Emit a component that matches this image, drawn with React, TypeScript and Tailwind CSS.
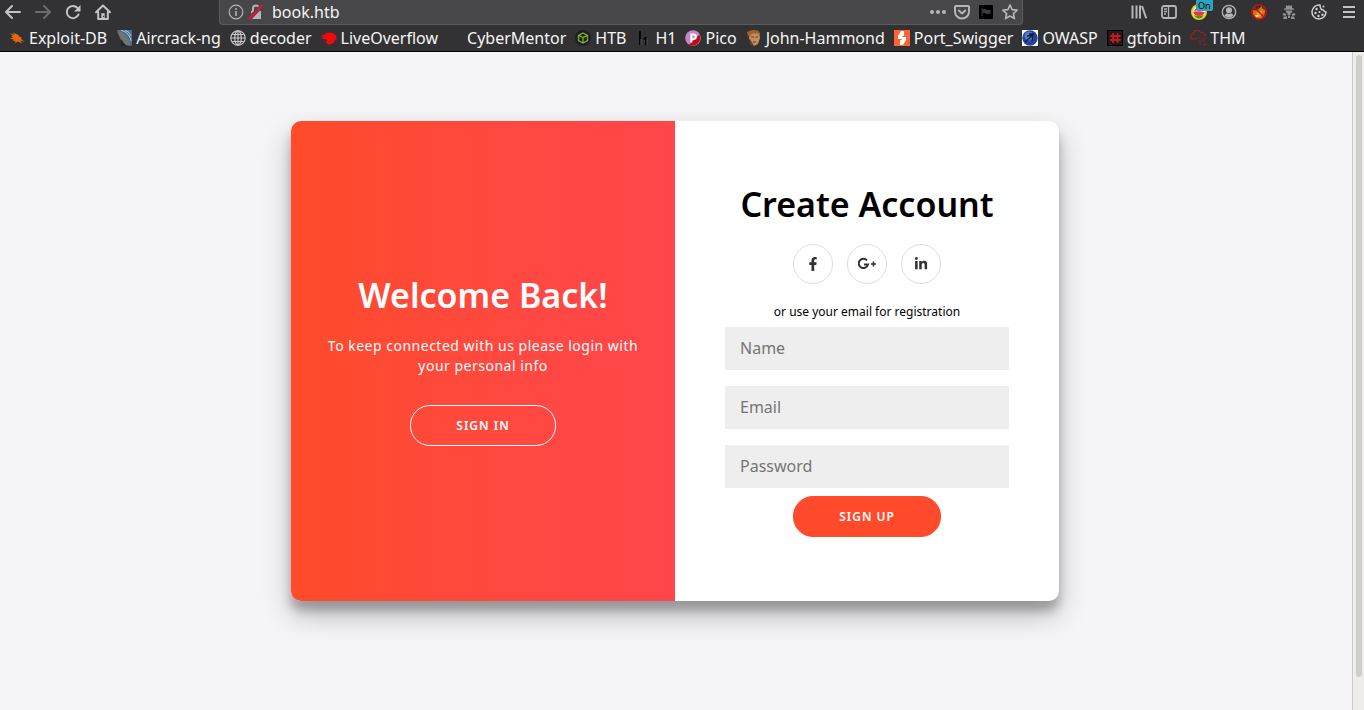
import type { ReactNode } from 'react';
import { FaFacebookF, FaLinkedinIn } from 'react-icons/fa';

type Item = { label: string; icon: ReactNode };

function Svg({ children, box = 16, className = 'size-4' }: { children?: ReactNode; box?: number; className?: string }) {
  return (
    <svg viewBox={`0 0 ${box} ${box}`} className={`${className} shrink-0`} fill="none" aria-hidden="true">
      {children}
    </svg>
  );
}

const line = { stroke: '#c3c3c4', strokeWidth: 2, strokeLinecap: 'round', strokeLinejoin: 'round' } as const;

const navigation: Item[] = [
  { label: 'Back', icon: <Svg><path {...line} d="M15 8H1.5M7 2 1 8l6 6" /></Svg> },
  { label: 'Forward', icon: <Svg><path {...line} stroke="#6c6c6e" d="M1 8h13.5M9 2l6 6-6 6" /></Svg> },
  {
    label: 'Reload',
    icon: (
      <Svg>
        <path {...line} d="M13.5 10.5A6.1 6.1 0 1 1 12.3 3.8" />
        <path d="M15.5 1v6.5H9z" fill="#c3c3c4" />
      </Svg>
    ),
  },
  {
    label: 'Home',
    icon: (
      <Svg>
        <path {...line} d="M1 8.3 8 1.5l7 6.8M3.2 8v7h9.6V8" />
        <path d="M6.3 9.2h3.4V15H6.3z" fill="#c3c3c4" />
        <path d="M8 11.8h1V13H8z" fill="#323234" />
      </Svg>
    ),
  },
];

const addressActions: Item[] = [
  {
    label: 'Page actions',
    icon: (
      <Svg>
        <g fill="#b5b5b6"><circle cx="2" cy="8" r="2" /><circle cx="8" cy="8" r="2" /><circle cx="14" cy="8" r="2" /></g>
      </Svg>
    ),
  },
  {
    label: 'Save to Pocket',
    icon: (
      <Svg>
        <path {...line} stroke="#b5b5b6" d="M2 2h12q1 0 1 1v4.500a7 7 0 0 1-14 0V3q0-1 1-1z" />
        <path {...line} stroke="#b5b5b6" d="m4.800 6.500 3.200 3 3.200-3" />
      </Svg>
    ),
  },
  {
    label: 'Extension',
    icon: (
      <Svg>
        <rect x="1" y="1" width="14" height="14" rx="1" fill="#000" />
        <path d="M4 4v8M5 5.500h3l1 1h3v3H8l-1-1H5z" stroke="#3c3c3d" fill="#3c3c3d" />
      </Svg>
    ),
  },
  {
    label: 'Bookmark this page',
    icon: <Svg><path {...line} stroke="#b5b5b6" strokeWidth={1.7} d="m8 1 2.100 4.600 5 .6-3.700 3.400 1 5L8 12.100l-4.400 2.500 1-5L.9 6.200l5-.6z" /></Svg>,
  },
];

const tools: Item[] = [
  {
    label: 'Library',
    icon: <Svg><path {...line} strokeLinecap="butt" stroke="#b5b5b6" d="M1.500 1.500v13M5.500 1.500v13M9 1.500v13M11 2l4.200 12.300" /></Svg>,
  },
  {
    label: 'Sidebars',
    icon: (
      <Svg>
        <rect x="1" y="2" width="14" height="12" rx="2" {...line} stroke="#b5b5b6" strokeWidth={1.800} />
        <path d="M7.500 2v12M3 5h3M3 7.500h3M3 10h2" stroke="#b5b5b6" strokeWidth="1.300" />
      </Svg>
    ),
  },
  {
    label: 'Proxy extension, on',
    icon: (
      <>
        <Svg>
          <circle cx="8" cy="8" r="8" fill="#f5cf19" />
          <circle cx="8" cy="8" r="6" fill="#fff" />
          <path d="M2.200 8.500Q8 6 13.800 8.500 12.500 12 8 12T2.200 8.500z" fill="#e23b3b" />
          <path d="M3 11q5 2 10 0-2 3.500-5 3.500T3 11z" fill="#429336" />
          <path d="M4 8.500V6l2-1v2" stroke="#cf2534" />
        </Svg>
        <span className="absolute -top-1 left-[5px] rounded-b-xs bg-[#2ba3bd] px-0.5 text-[9px] leading-[11px] text-black">On</span>
      </>
    ),
  },
  {
    label: 'Account',
    icon: (
      <Svg>
        <circle cx="8" cy="8" r="6.700" stroke="#b5b5b6" strokeWidth="1.300" />
        <circle cx="8" cy="6.300" r="3" fill="#b5b5b6" />
        <path d="M3.500 11.500q1-2 2.500-2.300 2 1.500 4 0 1.500.3 2.500 2.300Q10.500 13.800 8 13.800t-4.500-2.300z" fill="#b5b5b6" />
      </Svg>
    ),
  },
  {
    label: 'FoxyProxy',
    icon: (
      <Svg>
        <path d="m1.500 6 4 .5L9 4l1.500-2 1 2.500 3 2-1.500 6L9 15l-4-1-3-4z" fill="#dd6f10" />
        <path d="m5 8 3 1 2-3 1.500 2-1 4-3 1z" fill="#f3a23c" />
        <path d="M4 11h3v2H5z" fill="#f4e2bc" />
        <circle cx="8" cy="8" r="7.200" stroke="#c51414" strokeWidth="1.500" />
        <path d="m3 3 10 10" stroke="#c51414" strokeWidth="1.500" />
      </Svg>
    ),
  },
  {
    label: 'User agent',
    icon: (
      <Svg>
        <g fill="#929293">
          <path d="M5 4V1l1.500 1L8 1.300 9.500 2 11 1v3l2 .8v1H3v-1z" />
          <path d="M4.500 6.500h7L10.500 9h-5zM6.500 9h3v2h-3zM2.500 9l3 1-1 2-3-1zM13.500 9l-3 1 1 2 3-1zM3 12.500h3V15H2zM13 12.500h-3V15h4zM7 11.500h2V14H7z" />
        </g>
      </Svg>
    ),
  },
  {
    label: 'Cookie manager',
    icon: (
      <Svg>
        <path d="M9 1.100A7 7 0 1 0 15 8q-2 .2-2.400-1.800Q9 6 9 1.100z" stroke="#d0d0d1" strokeWidth="1.500" />
        <g fill="#d0d0d1">
          <circle cx="5.500" cy="5" r="1.200" /><circle cx="4.500" cy="9" r="1.200" /><circle cx="8.500" cy="8" r="1.100" />
          <circle cx="7.500" cy="12" r="1.200" /><circle cx="11.500" cy="10.800" r="1.200" /><circle cx="12.500" cy="2.500" r="1" />
        </g>
      </Svg>
    ),
  },
  { label: 'Open menu', icon: <Svg><path {...line} strokeLinecap="butt" d="M2 3h12M2 8h12M2 13h12" /></Svg> },
];

const bookmarks: Item[] = [
  {
    label: 'Exploit-DB',
    icon: <Svg><path d="m1 3 4.500 2L4 2.500l5 2.300 2 2.200 2 .8-1 1 3.500 3.200-4-1.500 1.500 3L9 11.500 6 13l.5-1.800L3.500 11l2-1L.500 8.500 4 8 2 6l2 .300z" fill="#e86410" /></Svg>,
  },
  {
    label: 'Aircrack-ng',
    icon: (
      <Svg>
        <path d="M1 0h15v16z" fill="#4d6d94" />
        <path d="M5 0q9 3 10 11M9 0q5 2 6 6" stroke="#a8c5df" />
        <path d="M1 1q10 1 14 15-9-1-11-8z" fill="#6d7672" />
        <path d="m5 9 5 7H5z" fill="#252725" />
      </Svg>
    ),
  },
  {
    label: 'decoder',
    icon: (
      <Svg>
        <g stroke="#c6c6c7" strokeWidth="1.200">
          <circle cx="8" cy="8" r="7.200" /><ellipse cx="8" cy="8" rx="3.300" ry="7.200" /><path d="M8 1v14M1 8h14M2 4.500h12M2 11.500h12" />
        </g>
      </Svg>
    ),
  },
  {
    label: 'LiveOverflow',
    icon: <Svg><path d="M0 6 4 4.500 5 3l4-.5 3 .5 1.500 1.500 2 .5-.5 2 1 2-2 1-1 2.500L10 14l-3 .5L5 12l1-2-2-1-3 0 1-1.500z" fill="#f60606" /></Svg>,
  },
  { label: 'CyberMentor', icon: <Svg /> },
  {
    label: 'HTB',
    icon: (
      <Svg>
        <circle cx="8" cy="8" r="8" fill="#18202b" />
        <path d="m8 3 4.500 2.300v5.400L8 13l-4.500-2.300V5.300zM3.500 5.300 8 7.600l4.500-2.300M8 7.600V13" stroke="#86ad15" strokeWidth="1.300" />
      </Svg>
    ),
  },
  {
    label: 'H1',
    icon: (
      <Svg>
        <path d="M4 1h2v14H4zM8 9l2-2h2v8h-2v-5z" fill="#050505" />
        <path d="M6 9v6M12 8v7" stroke="#555" />
      </Svg>
    ),
  },
  {
    label: 'Pico',
    icon: (
      <Svg>
        <circle cx="8" cy="8" r="7.800" fill="#c785c5" />
        <path d="M14.500 4.500A7.800 7.800 0 0 1 4 14.700z" fill="#c80812" />
        <path d="M6.300 12.500v-8h2.200a2.300 2.300 0 0 1 0 4.600H6.500" stroke="#fff" strokeWidth="2" />
      </Svg>
    ),
  },
  {
    label: 'John-Hammond',
    icon: (
      <Svg>
        <path d="M3 2q5-3 10 0l1 6-2 6-4 2-3-3-2-5z" fill="#c68d5e" />
        <path d="M2 6 1 2l5-2 6 .5 2 3v3l-2-3-6 0-2 3z" fill="#a55f29" />
        <path d="M5 7h3M9.500 7H12M7 12h3" stroke="#663a24" />
        <path d="m4 9 3 5 1 2-4-2z" fill="#6e412a" />
      </Svg>
    ),
  },
  {
    label: 'Port_Swigger',
    icon: (
      <Svg>
        <path d="M0 0h16v16H0z" fill="#fd6535" />
        <path d="M7 1h3v4.500L7.500 7H12v3l-3 5H6v-4.500L8.500 9H4V6z" fill="#fff" />
      </Svg>
    ),
  },
  {
    label: 'OWASP',
    icon: (
      <Svg>
        <path d="M0 0h16v16H0z" fill="#fff" />
        <circle cx="8" cy="8" r="7.700" fill="#24449b" />
        <circle cx="7" cy="6" r="4.500" fill="#5878c6" />
        <path d="m3 12 8-7M5 6l6-1-1 6M7 4l5 0" stroke="#111e50" strokeWidth="1.300" />
      </Svg>
    ),
  },
  {
    label: 'gtfobin',
    icon: (
      <Svg>
        <path d="M.5.5h15v15H.5z" fill="#23171a" stroke="#000" />
        <path d="M6 3v10M10.500 3v10M3 6h10.500M3 10h10.500" stroke="#c71920" strokeWidth="1.800" />
      </Svg>
    ),
  },
  {
    label: 'THM',
    icon: (
      <Svg>
        <path d="M7 9H3a2.500 2.500 0 0 1 0-5 4 4 0 0 1 7.500-1.500A3.500 3.500 0 0 1 15 6.500" stroke="#a31c22" strokeWidth="1.200" />
        <path d="M8 8h2m1 0h1m1 1h3M9 11h3m1 0h2M9 13.500h2m2 1h3" stroke="#9a1c22" />
      </Svg>
    ),
  },
];

const fields = [
  { id: 'name', label: 'Name', type: 'text' },
  { id: 'email', label: 'Email', type: 'email' },
  { id: 'password', label: 'Password', type: 'password' },
];

const socials: Item[] = [
  { label: 'Facebook', icon: <FaFacebookF className="size-3.5" /> },
  {
    label: 'Google Plus',
    icon: (
      <svg viewBox="0 0 18 14" className="h-3.5 w-[18px]" fill="none" aria-hidden="true">
        <path d="M9 3.300A4.700 4.700 0 1 0 10 7.600H6" stroke="currentColor" strokeWidth="2" />
        <path d="M15.500 4.500v5M13 7h5" stroke="currentColor" strokeWidth="1.600" />
      </svg>
    ),
  },
  { label: 'LinkedIn', icon: <FaLinkedinIn className="size-3.5" /> },
];

function IconButtons({ items }: { items: Item[] }) {
  return items.map(({ label, icon }) => (
    <button key={label} type="button" aria-label={label} className="relative flex size-4 items-center justify-center">
      {icon}
    </button>
  ));
}

function BrowserBar() {
  return (
    <header className="border-b border-black bg-[#323234] text-[#f5f5f5]">
      <div className="flex h-[25px] items-start">
        <div className="flex h-6 w-[219px] items-center gap-3.5 pl-[5px]">
          <IconButtons items={navigation} />
        </div>
        <div className="flex h-[25px] min-w-0 flex-1 items-center rounded-b-sm border border-t-0 border-[#5b5b5d] bg-[#474749] pr-1 pl-2">
          <Svg>
            <circle cx="8" cy="8" r="6.800" stroke="#b5b5b6" strokeWidth="1.200" />
            <path d="M8 7v5M8 4v1.700" stroke="#b5b5b6" strokeWidth="1.600" />
          </Svg>
          <Svg className="ml-1 size-4">
            <path d="M3 7h10v8H3z" fill="#b5b5b6" />
            <path d="M5 7V4.500a3 3 0 0 1 6 0V7" stroke="#b5b5b6" strokeWidth="2" />
            <path d="M1.500 14.500 14 1.500" stroke="#474749" strokeWidth="4" />
            <path d="M1.500 14.500 14 1.500" stroke="#f20a45" strokeWidth="2" strokeLinecap="round" />
          </Svg>
          <input aria-label="Address" defaultValue="book.htb" className="ml-2 min-w-0 flex-1 bg-transparent text-base leading-6 outline-none" />
          <div className="flex items-center gap-2">
            <IconButtons items={addressActions} />
          </div>
        </div>
        <div className="flex h-6 w-[341px] items-center justify-end gap-3.5 pr-[7px]">
          <IconButtons items={tools} />
        </div>
      </div>
      <nav aria-label="Bookmarks" className="flex h-[26px] items-center gap-[9px] pl-[9px]">
        {bookmarks.map(({ label, icon }) => (
          <a key={label} href="#" className="flex items-center gap-1 text-base leading-6 whitespace-nowrap">
            {icon}
            {label}
          </a>
        ))}
      </nav>
    </header>
  );
}

export default function App() {
  return (
    <div className="flex min-h-screen flex-col bg-[#f6f5f7] font-['Noto_Sans',sans-serif]">
      <BrowserBar />
      <div className="flex flex-1">
        <main className="flex flex-1 items-center justify-center bg-[#f5f5f8] pr-0.5 pb-10">
          <div className="grid min-h-[480px] w-full max-w-3xl grid-cols-2 overflow-hidden rounded-[10px] bg-white shadow-[0_14px_28px_rgba(0,0,0,0.25),0_10px_10px_rgba(0,0,0,0.22)]">
            <section className="flex flex-col items-center justify-center bg-linear-to-r from-[#ff4b2b] to-[#ff464c] px-8 text-center text-white">
              <h1 className="text-[34px] leading-[38px] font-semibold">Welcome Back!</h1>
              <p className="mt-[22px] text-sm leading-5 tracking-[0.5px]">To keep connected with us please login with your personal info</p>
              <button type="button" className="mt-[29px] h-[41px] rounded-[20px] border border-white px-[45px] text-xs font-semibold tracking-[1px] uppercase">
                Sign In
              </button>
            </section>
            <form className="flex flex-col items-center justify-center px-[50px] text-center" onSubmit={(event) => event.preventDefault()}>
              <h1 className="text-[34px] leading-[38px] font-semibold text-black">Create Account</h1>
              <div className="mt-[21px] flex gap-3.5">
                {socials.map(({ label, icon }) => (
                  <a key={label} href="#" aria-label={label} className="flex size-10 items-center justify-center rounded-full border border-[#ddd] text-[#333]">
                    {icon}
                  </a>
                ))}
              </div>
              <p className="mt-5 text-xs leading-4 text-black">or use your email for registration</p>
              <div className="mt-[7px] flex w-full flex-col gap-4">
                {fields.map(({ id, label, type }) => (
                  <input
                    key={id}
                    id={id}
                    type={type}
                    aria-label={label}
                    placeholder={label}
                    className="block h-[43px] w-full bg-[#eee] px-[15px] pb-0.5 text-base text-black placeholder:text-[#757575]"
                  />
                ))}
              </div>
              <button type="submit" className="mt-2 h-[41px] rounded-[20px] border border-[#ff4b2b] bg-[#ff4b2b] px-[45px] text-xs font-semibold tracking-[1px] text-white uppercase">
                Sign Up
              </button>
            </form>
          </div>
        </main>
        <div className="flex w-3 justify-center border-l border-[#cdc9c6] bg-[#efedeb] pt-[3px]" aria-hidden="true">
          <div className="h-[95%] w-1.5 rounded-full bg-[#cecece]" />
        </div>
      </div>
    </div>
  );
}
